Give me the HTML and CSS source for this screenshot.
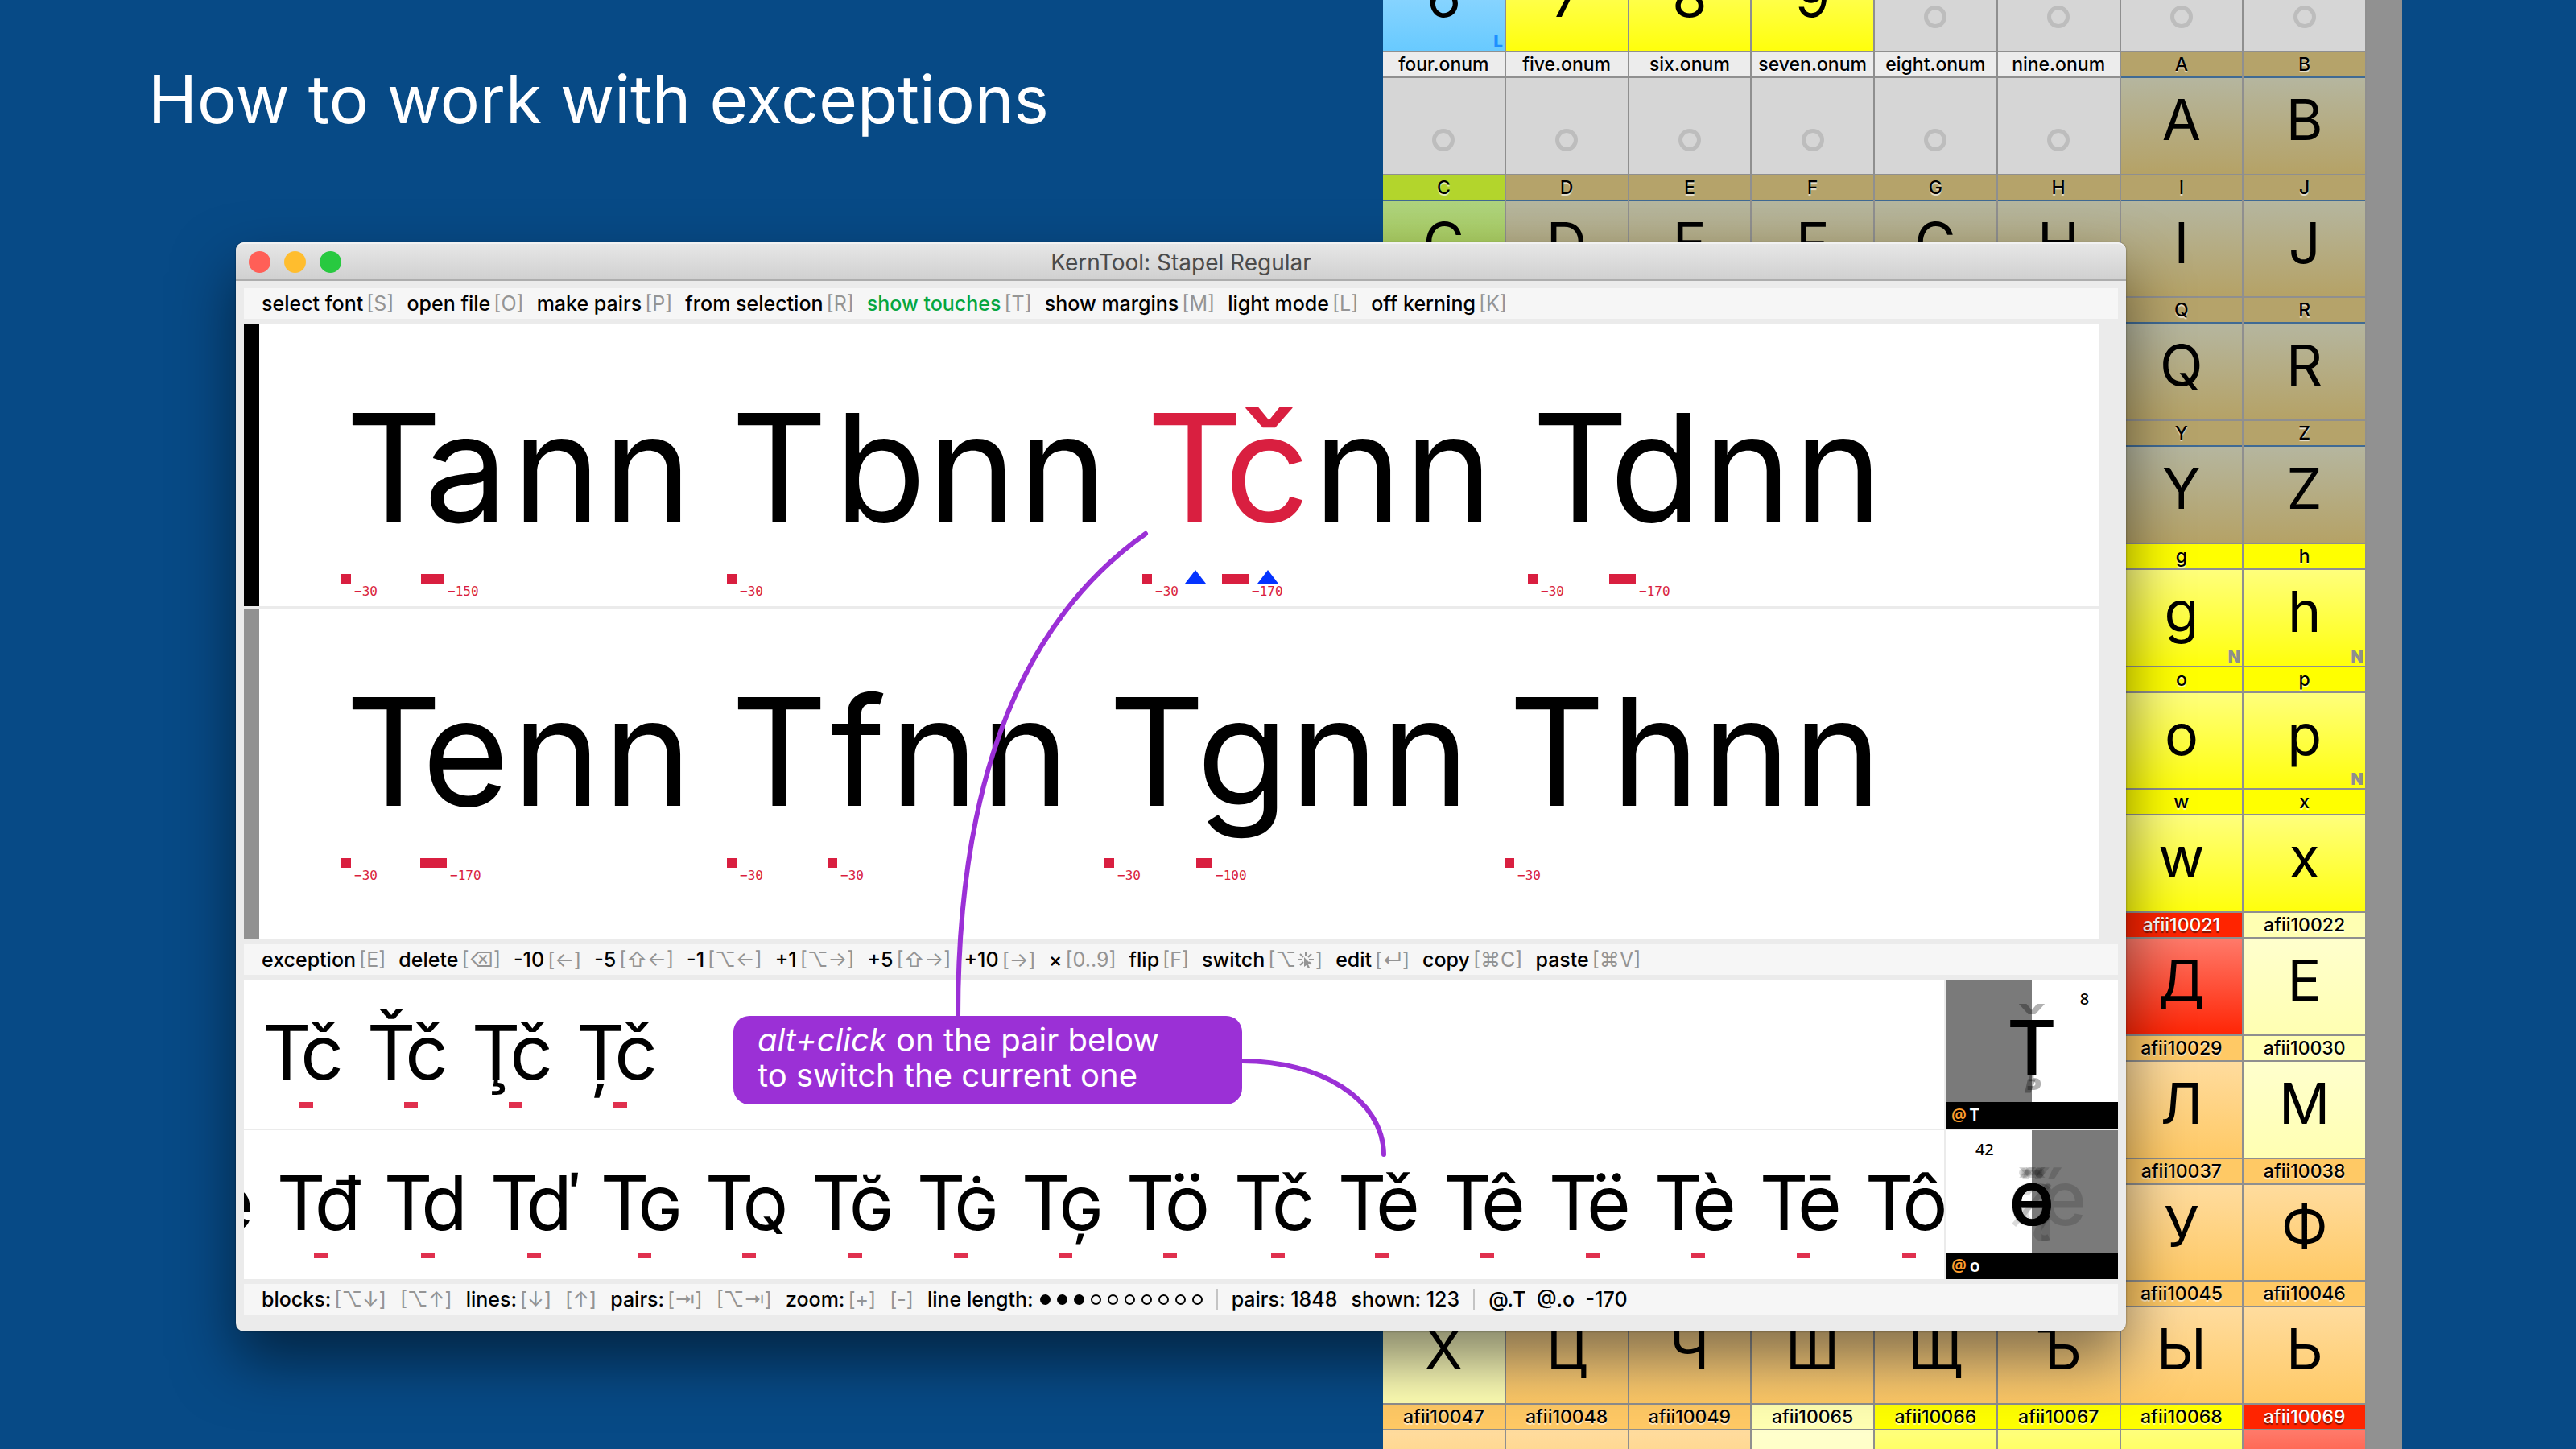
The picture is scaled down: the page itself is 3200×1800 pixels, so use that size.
FILE: index.html
```html
<!DOCTYPE html>
<html lang="en">
<head>
<meta charset="utf-8">
<title>How to work with exceptions</title>
<link rel="stylesheet" href="styles.css">
</head>
<body>
<main class="desktop">
  <h1 class="headline">How to work with exceptions</h1>

  <section class="font-window">
    <div class="glyph-grid">
      <div class="cell blue"><span class="name"></span><span class="glyph">6</span><b class="mark">L</b></div>
      <div class="cell yellow"><span class="name"></span><span class="glyph">7</span></div>
      <div class="cell yellow"><span class="name"></span><span class="glyph">8</span></div>
      <div class="cell yellow"><span class="name"></span><span class="glyph">9</span></div>
      <div class="cell empty"><span class="name"></span><i class="ring"></i></div>
      <div class="cell empty"><span class="name"></span><i class="ring"></i></div>
      <div class="cell empty"><span class="name"></span><i class="ring"></i></div>
      <div class="cell empty"><span class="name"></span><i class="ring"></i></div>

      <div class="cell empty"><span class="name">four.onum</span><i class="ring"></i></div>
      <div class="cell empty"><span class="name">five.onum</span><i class="ring"></i></div>
      <div class="cell empty"><span class="name">six.onum</span><i class="ring"></i></div>
      <div class="cell empty"><span class="name">seven.onum</span><i class="ring"></i></div>
      <div class="cell empty"><span class="name">eight.onum</span><i class="ring"></i></div>
      <div class="cell empty"><span class="name">nine.onum</span><i class="ring"></i></div>
      <div class="cell khaki"><span class="name">A</span><span class="glyph">A</span></div>
      <div class="cell khaki"><span class="name">B</span><span class="glyph">B</span></div>

      <div class="cell lime"><span class="name">C</span><span class="glyph">C</span></div>
      <div class="cell khaki"><span class="name">D</span><span class="glyph">D</span></div>
      <div class="cell khaki"><span class="name">E</span><span class="glyph">E</span></div>
      <div class="cell khaki"><span class="name">F</span><span class="glyph">F</span></div>
      <div class="cell khaki"><span class="name">G</span><span class="glyph">G</span></div>
      <div class="cell khaki"><span class="name">H</span><span class="glyph">H</span></div>
      <div class="cell khaki"><span class="name">I</span><span class="glyph">I</span></div>
      <div class="cell khaki"><span class="name">J</span><span class="glyph">J</span></div>

      <div class="cell khaki seventh"><span class="name">Q</span><span class="glyph">Q</span></div>
      <div class="cell khaki"><span class="name">R</span><span class="glyph">R</span></div>
      <div class="cell khaki seventh"><span class="name">Y</span><span class="glyph">Y</span></div>
      <div class="cell khaki"><span class="name">Z</span><span class="glyph">Z</span></div>
      <div class="cell yellow seventh"><span class="name">g</span><span class="glyph">g</span><b class="mark">N</b></div>
      <div class="cell yellow"><span class="name">h</span><span class="glyph">h</span><b class="mark">N</b></div>
      <div class="cell yellow seventh"><span class="name">o</span><span class="glyph">o</span></div>
      <div class="cell yellow"><span class="name">p</span><span class="glyph">p</span><b class="mark">N</b></div>
      <div class="cell yellow seventh"><span class="name">w</span><span class="glyph">w</span></div>
      <div class="cell yellow"><span class="name">x</span><span class="glyph">x</span></div>
      <div class="cell red seventh"><span class="name">afii10021</span><span class="glyph">Д</span></div>
      <div class="cell cream"><span class="name">afii10022</span><span class="glyph">Е</span></div>
      <div class="cell orange seventh"><span class="name">afii10029</span><span class="glyph">Л</span></div>
      <div class="cell cream"><span class="name">afii10030</span><span class="glyph">М</span></div>
      <div class="cell orange seventh"><span class="name">afii10037</span><span class="glyph">У</span></div>
      <div class="cell orange"><span class="name">afii10038</span><span class="glyph">Ф</span></div>

      <div class="cell cream"><span class="name"></span><span class="glyph">Х</span></div>
      <div class="cell orange"><span class="name"></span><span class="glyph">Ц</span></div>
      <div class="cell orange"><span class="name"></span><span class="glyph">Ч</span></div>
      <div class="cell orange"><span class="name"></span><span class="glyph">Ш</span></div>
      <div class="cell orange"><span class="name"></span><span class="glyph">Щ</span></div>
      <div class="cell orange"><span class="name"></span><span class="glyph">Ъ</span></div>
      <div class="cell orange"><span class="name">afii10045</span><span class="glyph">Ы</span></div>
      <div class="cell orange"><span class="name">afii10046</span><span class="glyph">Ь</span></div>

      <div class="cell orange"><span class="name">afii10047</span></div>
      <div class="cell orange"><span class="name">afii10048</span></div>
      <div class="cell orange"><span class="name">afii10049</span></div>
      <div class="cell cream"><span class="name">afii10065</span></div>
      <div class="cell yellow"><span class="name">afii10066</span></div>
      <div class="cell yellow"><span class="name">afii10067</span></div>
      <div class="cell yellow"><span class="name">afii10068</span></div>
      <div class="cell red"><span class="name">afii10069</span></div>
    </div>
  </section>

  <section class="kern-window">
    <header class="titlebar">
      <div class="lights">
        <button class="light close" aria-label="Close"></button>
        <button class="light minimize" aria-label="Minimize"></button>
        <button class="light maximize" aria-label="Zoom"></button>
      </div>
      <h2 class="window-title">KernTool: Stapel Regular</h2>
    </header>

    <nav class="toolbar">
      <button class="tool">select font<kbd>[S]</kbd></button>
      <button class="tool">open file<kbd>[O]</kbd></button>
      <button class="tool">make pairs<kbd>[P]</kbd></button>
      <button class="tool">from selection<kbd>[R]</kbd></button>
      <button class="tool active">show touches<kbd>[T]</kbd></button>
      <button class="tool">show margins<kbd>[M]</kbd></button>
      <button class="tool">light mode<kbd>[L]</kbd></button>
      <button class="tool">off kerning<kbd>[K]</kbd></button>
    </nav>

    <div class="lines">
      <div class="line current">
        <div class="word"><span class="g" style="width:140px">T<i class="kern first" style="--kern:12px">−30</i></span><span class="g" style="width:112px;margin-left:-36px">a<i class="kern" style="--kern:29px">−150</i></span><span class="g" style="width:113px">n</span><span class="g" style="width:113px">n</span></div>
        <div class="word"><span class="g" style="width:140px">T<i class="kern first" style="--kern:12px">−30</i></span><span class="g" style="width:115px;margin-left:-2px">b</span><span class="g" style="width:113px">n</span><span class="g" style="width:113px">n</span></div>
        <div class="word"><span class="g picked" style="width:140px">T<i class="kern first" style="--kern:12px">−30</i><i class="pointer"></i></span><span class="g picked" style="width:112px;margin-left:-36px">č<i class="kern" style="--kern:33px">−170</i><i class="pointer"></i></span><span class="g" style="width:113px">n</span><span class="g" style="width:113px">n</span></div>
        <div class="word"><span class="g" style="width:140px">T<i class="kern first" style="--kern:12px">−30</i></span><span class="g" style="width:115px;margin-left:-34px">d<i class="kern" style="--kern:33px">−170</i></span><span class="g" style="width:113px">n</span><span class="g" style="width:113px">n</span></div>
      </div>
      <div class="line">
        <div class="word"><span class="g" style="width:140px">T<i class="kern first" style="--kern:12px">−30</i></span><span class="g" style="width:113px;margin-left:-37px">e<i class="kern" style="--kern:33px">−170</i></span><span class="g" style="width:113px">n</span><span class="g" style="width:113px">n</span></div>
        <div class="word"><span class="g" style="width:140px">T<i class="kern first" style="--kern:12px">−30</i></span><span class="g" style="width:76px;margin-left:-10px">f<i class="kern" style="--kern:12px">−30</i></span><span class="g" style="width:113px">n</span><span class="g" style="width:113px">n</span></div>
        <div class="word"><span class="g" style="width:140px">T<i class="kern first" style="--kern:12px">−30</i></span><span class="g" style="width:115px;margin-left:-21px">g<i class="kern" style="--kern:20px">−100</i></span><span class="g" style="width:113px">n</span><span class="g" style="width:113px">n</span></div>
        <div class="word"><span class="g" style="width:140px">T<i class="kern first" style="--kern:12px">−30</i></span><span class="g" style="width:113px;margin-left:-4px">h</span><span class="g" style="width:113px">n</span><span class="g" style="width:113px">n</span></div>
      </div>
    </div>

    <nav class="toolbar">
      <button class="tool">exception<kbd>[E]</kbd></button>
      <button class="tool">delete<kbd>[⌫]</kbd></button>
      <button class="tool">-10<kbd>[←]</kbd></button>
      <button class="tool">-5<kbd>[⇧←]</kbd></button>
      <button class="tool">-1<kbd>[⌥←]</kbd></button>
      <button class="tool">+1<kbd>[⌥→]</kbd></button>
      <button class="tool">+5<kbd>[⇧→]</kbd></button>
      <button class="tool">+10<kbd>[→]</kbd></button>
      <button class="tool">×<kbd>[0..9]</kbd></button>
      <button class="tool">flip<kbd>[F]</kbd></button>
      <button class="tool">switch<kbd>[⌥<svg class="click" viewBox="0 0 24 24" aria-hidden="true"><path d="M12 2v6M5 5l4 4M19 5l-4 4M2 12h6M16 12h6M5 19l4-4M16 15l3 3" fill="none" stroke="currentColor" stroke-width="2"/><path d="M10 9v12l3-2 2 4 2-1-2-4h4z" fill="currentColor"/></svg>]</kbd></button>
      <button class="tool">edit<kbd>[↵]</kbd></button>
      <button class="tool">copy<kbd>[⌘C]</kbd></button>
      <button class="tool">paste<kbd>[⌘V]</kbd></button>
    </nav>

    <div class="groups">
      <div class="pairs">
        <div class="pair"><span>T</span><span class="second" style="width:56px">č</span></div>
        <div class="pair"><span>Ť</span><span class="second" style="width:56px">č</span></div>
        <div class="pair"><span>Ţ</span><span class="second" style="width:56px">č</span></div>
        <div class="pair"><span>Ț</span><span class="second" style="width:56px">č</span></div>
      </div>
      <div class="preview">
        <div class="stack left-side">
          <span class="count">8</span>
          <span class="layer faint">Ť</span><span class="layer faint">Ţ</span><span class="layer faint">Ț</span><span class="layer">T</span>
        </div>
        <div class="group-name"><i>@</i>T</div>
      </div>

      <div class="pairs scrolled">
        <div class="lone">e</div>
        <div class="pair"><span>T</span><span class="second" style="width:59px">đ</span></div>
        <div class="pair"><span>T</span><span class="second" style="width:58px">d</span></div>
        <div class="pair"><span>T</span><span class="second" style="width:63px">ď</span></div>
        <div class="pair"><span>T</span><span class="second" style="width:56px"><small>G</small></span></div>
        <div class="pair"><span>T</span><span class="second" style="width:58px"><small>Q</small></span></div>
        <div class="pair"><span>T</span><span class="second" style="width:57px"><small>Ğ</small></span></div>
        <div class="pair"><span>T</span><span class="second" style="width:56px"><small>Ġ</small></span></div>
        <div class="pair"><span>T</span><span class="second" style="width:56px"><small>Ģ</small></span></div>
        <div class="pair"><span>T</span><span class="second" style="width:60px">ö</span></div>
        <div class="pair"><span>T</span><span class="second" style="width:55px">č</span></div>
        <div class="pair"><span>T</span><span class="second" style="width:57px">ě</span></div>
        <div class="pair"><span>T</span><span class="second" style="width:57px">ê</span></div>
        <div class="pair"><span>T</span><span class="second" style="width:57px">ë</span></div>
        <div class="pair"><span>T</span><span class="second" style="width:57px">è</span></div>
        <div class="pair"><span>T</span><span class="second" style="width:57px">ē</span></div>
        <div class="pair"><span>T</span><span class="second" style="width:57px">ô</span></div>
      </div>
      <div class="preview">
        <div class="stack right-side">
          <span class="count">42</span>
          <span class="layer ghost">ő</span><span class="layer ghost">ě</span><span class="layer ghost">ē</span><span class="layer ghost">ê</span><span class="layer ghost">ö</span><span class="layer ghost">q</span><span class="layer ghost">ę</span><span class="layer ghost">ø</span><span class="layer ghost ae">ǽ</span><span class="layer">e</span><span class="layer">o</span>
        </div>
        <div class="group-name"><i>@</i>o</div>
      </div>
    </div>

    <footer class="toolbar status">
      <span class="tool">blocks:<kbd>[⌥↓]</kbd></span><kbd>[⌥↑]</kbd>
      <span class="tool">lines:<kbd>[↓]</kbd></span><kbd>[↑]</kbd>
      <span class="tool">pairs:<kbd>[⇥]</kbd></span><kbd>[⌥⇥]</kbd>
      <span class="tool">zoom:<kbd>[+]</kbd></span><kbd>[-]</kbd>
      <span class="tool">line length:<span class="dots"><i class="on"></i><i class="on"></i><i class="on"></i><i></i><i></i><i></i><i></i><i></i><i></i><i></i></span></span>
      <span class="rule"></span>
      <span class="tool">pairs: 1848</span>
      <span class="tool">shown: 123</span>
      <span class="rule"></span>
      <span class="tool">@.T&nbsp; @.o&nbsp; -170</span>
    </footer>
  </section>

  <svg class="leaders" viewBox="0 0 700 800" aria-hidden="true">
    <path d="M323 13C130 150 90 400 90 612M443 668C540 668 618 715 619 784"/>
  </svg>
  <p class="hint"><em>alt+click</em> on the pair below<br>to switch the current one</p>
</main>
</body>
</html>
```
FILE: styles.css
```css
* {
  box-sizing: border-box;
}

body {
  margin: 0;
  font-family: Inter, "Liberation Sans", "DejaVu Sans", sans-serif;
  color: #000;
}

button {
  padding: 0;
  border: 0;
  background: none;
  color: inherit;
  font: inherit;
}

i {
  font-style: normal;
}

.desktop {
  position: relative;
  min-height: 100vh;
  overflow: hidden;
  background: #074a86;
}

.headline {
  margin: 0;
  padding: 74px 184px 0;
  color: #fff;
  font-size: 82px;
  font-weight: 400;
  line-height: 100px;
}

/* Font overview */

.font-window {
  position: absolute;
  top: -90px;
  bottom: 0;
  left: 1718px;
  right: 216px;
  padding-right: 44px;
  overflow: hidden;
  background: #919191;
}

.glyph-grid {
  display: grid;
  grid-template-columns: repeat(8, 1fr);
}

.cell {
  position: relative;
  display: flex;
  flex-direction: column;
  align-items: center;
  aspect-ratio: 1;
  min-width: 0;
  border-right: 2px solid #8f8f8f;
  background: linear-gradient(var(--top) 34px, var(--bottom));
  --rule: #8f8f8f;
}

.seventh {
  grid-column: 7;
}

.name {
  align-self: stretch;
  height: 34px;
  border-top: 2px solid #8f8f8f;
  border-bottom: 2px solid var(--rule);
  background: var(--label);
  font-size: 23px;
  font-weight: 500;
  line-height: 31px;
  text-align: center;
  text-shadow: 0 2px 1px rgba(255, 255, 255, 0.7);
}

.glyph {
  font-size: 70px;
  line-height: 104px;
}

.ring {
  width: 28px;
  height: 28px;
  margin-top: 63px;
  border: 5px solid #bdbdbd;
  border-radius: 50%;
}

.mark {
  position: absolute;
  right: 2px;
  bottom: 2px;
  color: #8e8e8e;
  font-size: 20px;
  font-weight: 900;
  line-height: 18px;
}

.empty { --label: #ececec; --top: #d6d6d6; --bottom: #d6d6d6; }
.blue { --label: #6accff; --top: #a0dcff; --bottom: #68caff; }
.blue .mark { color: #1e8fff; }
.yellow { --label: #ffff00; --top: #ffff7c; --bottom: #ffff0c; }
.khaki { --label: #b5a36a; --top: #b5b69f; --bottom: #b5a266; --rule: #3f6a94; }
.lime { --label: #b3d52c; --top: #aed37e; --bottom: #a8c93c; --rule: #3f6a94; }
.red { --label: #ff2400; --top: #ff7a6a; --bottom: #ff2505; }
.cream { --label: #ffffb2; --top: #ffffcd; --bottom: #ffffb2; }
.orange { --label: #ffc965; --top: #ffdc9e; --bottom: #ffc965; }

.red .name {
  color: #fff;
  text-shadow: 0 2px 1px rgba(0, 0, 0, 0.5);
}

/* Kerning window */

.kern-window {
  position: absolute;
  top: 301px;
  left: 293px;
  right: 559px;
  padding-bottom: 21px;
  border-radius: 10px;
  background: #ebebeb;
  box-shadow: 0 0 2px rgba(0, 0, 0, 0.5), 0 36px 76px rgba(0, 0, 0, 0.5);
}

.titlebar {
  position: relative;
  height: 48px;
  border-top: 2px solid #f2f2f2;
  border-bottom: 2px solid #adadad;
  border-radius: 10px 10px 0 0;
  background: linear-gradient(#e6e6e6, #d0d0d0);
}

.lights {
  position: absolute;
  top: 9px;
  left: 16px;
  display: flex;
  gap: 17px;
}

.light {
  width: 27px;
  height: 27px;
  border-radius: 50%;
}

.close { background: #ff5f57; }
.minimize { background: #ffbd2e; }
.maximize { background: #28c940; }

.window-title {
  margin: 0;
  color: #4b4b4b;
  font-size: 28px;
  font-weight: 400;
  line-height: 46px;
  text-align: center;
}

.toolbar {
  display: flex;
  align-items: center;
  gap: 16px;
  height: 38px;
  margin: 6px 10px;
  padding: 0 22px;
  background: #f6f6f6;
  font-size: 25px;
  font-weight: 500;
  line-height: 36px;
  white-space: nowrap;
}

.titlebar + .toolbar {
  margin: 9px 10px 7px;
}

.tool {
  display: flex;
  align-items: center;
  gap: 4px;
}

.active {
  color: #06a63f;
}

kbd {
  display: flex;
  align-items: center;
  color: #949494;
  font-family: Inter, "DejaVu Sans", sans-serif;
  font-weight: 400;
}

.click {
  width: 24px;
  height: 24px;
}

.lines {
  margin: 0 33px 0 10px;
}

.line {
  display: flex;
  gap: 37px;
  height: 411px;
  padding: 106px 0 0 97px;
  border-left: 19px solid #919191;
  background: #fff;
  font-size: 186px;
  line-height: 144px;
}

.current {
  height: 350px;
  margin-bottom: 3px;
  border-left-color: #000;
}

.word {
  display: flex;
  font-kerning: none;
}

.g {
  position: relative;
  display: flex;
  justify-content: center;
}

.picked {
  color: #d91f40;
}

.kern {
  position: absolute;
  top: 204px;
  left: 0;
  padding: 6px 0 0 calc(var(--kern) + 4px);
  background: linear-gradient(#d91f40, #d91f40) 0 0 / var(--kern) 12px no-repeat;
  color: #d91f40;
  font-family: "DejaVu Sans Mono", monospace;
  font-size: 16px;
  line-height: 32px;
}

.first {
  left: 5px;
}

.pointer {
  position: absolute;
  top: 199px;
  left: 44px;
  width: 26px;
  height: 17px;
  background: #0433ff;
  clip-path: polygon(50% 0, 100% 100%, 0 100%);
}

.first + .pointer {
  left: 58px;
}

.groups {
  display: grid;
  grid-template-columns: minmax(0, 1fr) 214px;
  gap: 2px;
  margin: 0 10px;
}

.pairs {
  display: flex;
  gap: 23px;
  height: 185px;
  padding-left: 18px;
  overflow: hidden;
  background: #fff;
  font-size: 94px;
  line-height: 180px;
}

.lone {
  flex: none;
  width: 56px;
  text-align: center;
}

.scrolled {
  padding-left: 0;
}

.scrolled .lone {
  margin-left: -43px;
}

.pair {
  position: relative;
  display: flex;
  flex: none;
}

.pair span {
  display: flex;
  justify-content: center;
  width: 70px;
}

.pair .second {
  margin-left: -19px;
}

.pair::after {
  content: "";
  position: absolute;
  top: 152px;
  left: 51px;
  width: 17px;
  height: 7px;
  background: #e0304e;
}

.pair small {
  font-size: 72px;
  font-weight: 500;
  line-height: 196px;
}

.preview {
  display: flex;
  flex-direction: column;
  font-family: "Noto Sans", sans-serif;
}

.stack {
  position: relative;
  flex: 1;
  overflow: hidden;
  background: linear-gradient(90deg, #7a7a7a 50%, #fff 50%);
}

.right-side {
  background: linear-gradient(90deg, #fff 50%, #7a7a7a 50%);
}

.count {
  position: absolute;
  top: 10px;
  left: 75%;
  width: 24px;
  font-size: 20px;
  font-weight: 500;
  line-height: 28px;
  text-align: center;
}

.right-side .count {
  left: 17%;
}

.layer {
  position: absolute;
  inset: 0;
  font-family: Inter, sans-serif;
  font-size: 94px;
  font-weight: 500;
  line-height: 168px;
  text-align: center;
}

.faint {
  opacity: 0.3;
}

.ghost {
  opacity: 0.14;
}

.ae {
  left: 50px;
}

.group-name {
  display: flex;
  gap: 4px;
  height: 33px;
  padding-left: 7px;
  background: #000;
  color: #fff;
  font-size: 21px;
  font-weight: 600;
  line-height: 33px;
}

.group-name i {
  color: #ff9f2e;
}

.status {
  gap: 17px;
  margin-bottom: 0;
}

.dots {
  display: flex;
  gap: 8px;
  margin-left: 4px;
}

.dots i {
  width: 13px;
  height: 13px;
  border: 2px solid #000;
  border-radius: 50%;
}

.dots .on {
  background: #000;
}

.rule {
  width: 2px;
  height: 26px;
  background: #c4c4c4;
}

/* Annotation */

.leaders {
  position: absolute;
  top: 650px;
  left: 1100px;
  width: 700px;
  height: 800px;
  fill: none;
  stroke: #9b30d6;
  stroke-width: 6;
  stroke-linecap: round;
}

.hint {
  position: absolute;
  top: 1262px;
  left: 911px;
  width: 632px;
  margin: 0;
  padding: 8px 30px 14px;
  border-radius: 20px;
  background: #9b30d6;
  color: #fff;
  font-size: 40px;
  line-height: 44px;
  white-space: nowrap;
}
```
